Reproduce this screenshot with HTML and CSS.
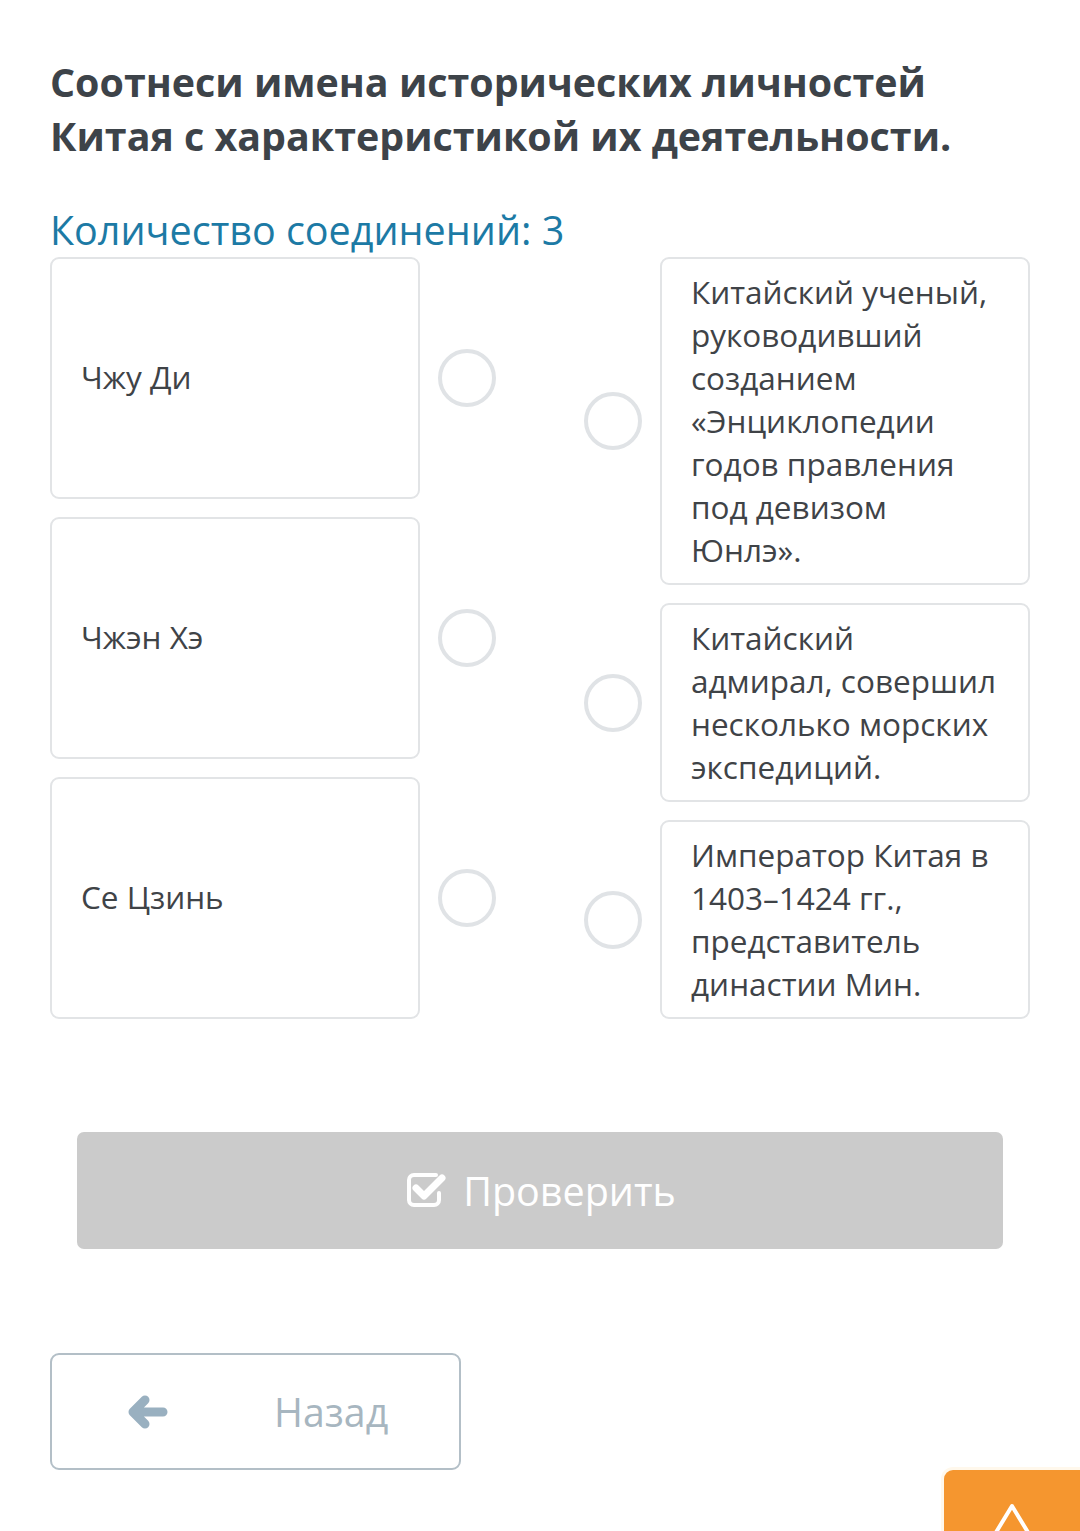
FILE: index.html
```html
<!DOCTYPE html>
<html lang="ru">
<head>
<meta charset="utf-8">
<title>Соотнеси</title>
<link rel="stylesheet" href="styles.css">
</head>
<body>
<main class="page">
  <h1 class="title">Соотнеси имена исторических личностей Китая с характеристикой их деятельности.</h1>
  <div class="counter">Количество соединений: 3</div>
  <div class="match">
    <div class="col col-left">
      <div class="item item-left"><div class="card card-left">Чжу Ди</div><span class="dot"></span></div>
      <div class="item item-left"><div class="card card-left">Чжэн Хэ</div><span class="dot"></span></div>
      <div class="item item-left"><div class="card card-left">Се Цзинь</div><span class="dot"></span></div>
    </div>
    <div class="col col-right">
      <div class="item item-right"><span class="dot"></span><div class="card card-right">Китайский ученый, руководивший созданием «Энциклопедии годов правления под девизом Юнлэ».</div></div>
      <div class="item item-right"><span class="dot"></span><div class="card card-right">Китайский адмирал, совершил несколько морских экспедиций.</div></div>
      <div class="item item-right"><span class="dot"></span><div class="card card-right">Император Китая в 1403–1424 гг., представитель династии Мин.</div></div>
    </div>
  </div>
  <div class="check-wrap">
    <button class="check-btn" type="button">
      <svg class="check-icon" width="42" height="38" viewBox="0 0 42 38" aria-hidden="true">
        <path d="M30 4 H8 a5 5 0 0 0 -5 5 V29 a5 5 0 0 0 5 5 H28 a5 5 0 0 0 5 -5 V22" fill="none" stroke="#fff" stroke-width="4" stroke-linecap="round"/>
        <path d="M10 17 L18 25 L36 7" fill="none" stroke="#fff" stroke-width="7" stroke-linecap="round" stroke-linejoin="round"/>
      </svg>
      <span>Проверить</span>
    </button>
  </div>
  <button class="back-btn" type="button">
    <svg class="back-icon" width="42" height="34" viewBox="0 0 42 34" aria-hidden="true">
      <path d="M36 17 H7 M18 5 L6 17 L18 29" fill="none" stroke="#99b0c0" stroke-width="9" stroke-linecap="round" stroke-linejoin="round"/>
    </svg>
    <span class="back-text">Назад</span>
  </button>
</main>
<div class="to-top">
  <svg width="46" height="40" viewBox="0 0 46 40" aria-hidden="true">
    <path d="M6 36 L23 8 L40 36" fill="none" stroke="#fff" stroke-width="4" stroke-linejoin="round"/>
  </svg>
</div>
</body>
</html>
```
FILE: styles.css
```css
html, body {
  margin: 0;
  padding: 0;
  background: #ffffff;
}
body {
  font-family: "Open Sans", "Noto Sans", sans-serif;
  width: 1080px;
  height: 1531px;
  overflow: hidden;
  position: relative;
}
.page {
  padding: 55px 50px 0 50px;
}
.title {
  margin: 0;
  font-size: 39.4px;
  line-height: 54px;
  font-weight: 700;
  color: #3d4349;
}
.counter {
  margin-top: 42px;
  font-size: 39.5px;
  line-height: 50px;
  color: #1c7aa5;
  height: 52px;
}
.match {
  display: flex;
  justify-content: space-between;
  width: 980px;
}
.col {
  display: flex;
  flex-direction: column;
  gap: 18px;
}
.col-left .item {
  flex: 1;
}
.item {
  display: flex;
  align-items: center;
  gap: 18px;
}
.card {
  box-sizing: border-box;
  width: 370px;
  border: 2px solid #e2e4e6;
  border-radius: 9px;
  background: #fff;
  color: #3f4347;
  font-size: 31.5px;
  line-height: 43px;
}
.card-left {
  align-self: stretch;
  display: flex;
  align-items: center;
  padding: 0 29px 4px 29px;
}
.card-right {
  padding: 11px 29px 12px 29px;
}
.dot {
  box-sizing: border-box;
  width: 58px;
  height: 58px;
  border: 4px solid #e0e3e6;
  border-radius: 50%;
  flex: none;
}
.check-wrap {
  padding: 113px 27px 0 27px;
}
.check-btn {
  width: 926px;
  height: 117px;
  border: none;
  border-radius: 7px;
  background: #cbcbcb;
  color: #fff;
  font-family: "Open Sans", "Noto Sans", sans-serif;
  font-size: 39.5px;
  display: flex;
  align-items: center;
  justify-content: center;
  gap: 15px;
  padding: 0 0 0 2px;
}
.check-icon {
  display: block;
  margin-top: -2px;
}
.back-btn {
  margin-top: 104px;
  width: 411px;
  height: 117px;
  box-sizing: border-box;
  border: 2px solid #b3bfc7;
  border-radius: 9px;
  background: #fff;
  display: flex;
  align-items: center;
  padding: 0 0 0 75px;
  font-family: "Open Sans", "Noto Sans", sans-serif;
}
.back-icon {
  display: block;
}
.back-text {
  margin-left: 105px;
  font-size: 39.3px;
  color: #a7b6c0;
}
.to-top {
  position: absolute;
  left: 944px;
  top: 1470px;
  width: 150px;
  height: 90px;
  background: #f5962f;
  border-radius: 9px 0 0 0;
  box-shadow: 0 0 0 3px #fff8ec;
  display: flex;
  justify-content: center;
  padding-top: 28px;
  box-sizing: border-box;
  padding-right: 14px;
}
```
